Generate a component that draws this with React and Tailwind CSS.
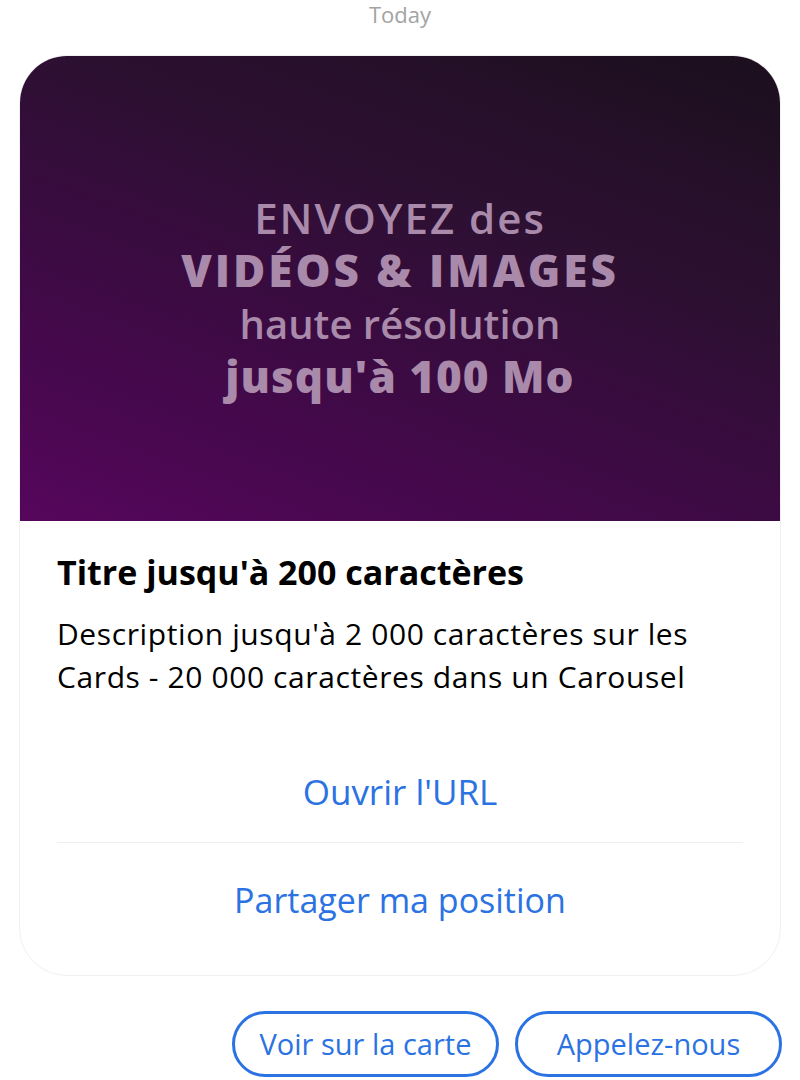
import React from "react";

const chip =
  "w-[267px] h-[66px] rounded-full border-[3px] border-[#2b72e2] flex items-center justify-center text-[29px] text-[#2b72e2]";

export default function App() {
  return (
    <div className="w-[800px] h-[1080px] bg-white overflow-hidden font-['Open_Sans',sans-serif]">
      <div className="h-[28px] flex items-center justify-center text-[22px] text-[#a3a3a3]">Today</div>
      <div className="mt-[27px] mx-[19px] rounded-[48px] border border-[#f0f0f0] overflow-hidden">
        <div className="h-[465px] pt-[16px] flex flex-col items-center justify-center text-center text-[#a98aab] bg-[linear-gradient(20deg,#56065c_0%,#3e0a45_35%,#2c1031_65%,#1b0f1d_100%)]">
          <div className="text-[42px] leading-[53px] font-semibold tracking-[2px]">ENVOYEZ des</div>
          <div className="text-[44px] leading-[53px] font-extrabold tracking-[3px]">VIDÉOS &amp; IMAGES</div>
          <div className="text-[40px] leading-[53px] font-semibold">haute résolution</div>
          <div className="text-[44px] leading-[53px] font-extrabold tracking-[1px]">jusqu'à 100 Mo</div>
        </div>
        <div className="px-[37px] pt-[31px]">
          <div className="text-[34px] leading-[40px] font-bold text-black">Titre jusqu'à 200 caractères</div>
          <div className="mt-[20px] text-[30px] leading-[43px] text-black tracking-[0.6px]">
            Description jusqu'à 2 000 caractères sur les
            <br />
            Cards - 20 000 caractères dans un Carousel
          </div>
        </div>
        <div className="mt-[45px] mx-[37px] pb-[18px]">
          <div className="h-[100px] flex items-center justify-center text-[35px] text-[#2b72e2] border-b border-[#efefef]">
            Ouvrir l'URL
          </div>
          <div className="h-[114px] flex items-center justify-center text-[34px] text-[#2b72e2]">
            Partager ma position
          </div>
        </div>
      </div>
      <div className="mt-[35px] pr-[18px] flex justify-end gap-[16px]">
        <div className={chip}>Voir sur la carte</div>
        <div className={chip}>Appelez-nous</div>
      </div>
    </div>
  );
}
